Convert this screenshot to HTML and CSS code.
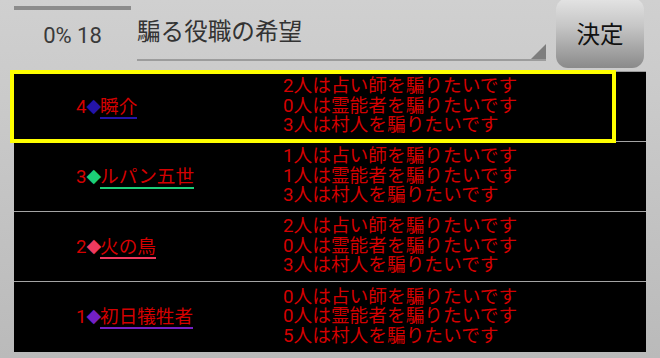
FILE: index.html
```html
<!DOCTYPE html>
<html lang="ja">
<head>
  <meta charset="UTF-8">
  <meta name="viewport" content="width=device-width,initial-scale=1.0">
  <title>騙る役職の希望</title>
  <link rel="stylesheet" href="styles.css">
</head>
<body>

  <header class="top">
    <div class="status">
      <div class="bar"></div>
      <div class="count">0% 18</div>
    </div>
    <div class="spinner">
      <span class="spinner-text">騙る役職の希望</span>
      <span class="spinner-arrow"></span>
    </div>
    <button class="decide">決定</button>
  </header>

  <ul class="wishes">
    <li class="wish selected">
      <div class="who"><span class="rank">4</span><span class="mark c-blue">◆</span><span class="name c-blue">瞬介</span></div>
      <div class="lines">
        <p>2人は占い師を騙りたいです</p>
        <p>0人は霊能者を騙りたいです</p>
        <p>3人は村人を騙りたいです</p>
      </div>
    </li>
    <li class="wish">
      <div class="who"><span class="rank">3</span><span class="mark c-green">◆</span><span class="name c-green">ルパン五世</span></div>
      <div class="lines">
        <p>1人は占い師を騙りたいです</p>
        <p>1人は霊能者を騙りたいです</p>
        <p>3人は村人を騙りたいです</p>
      </div>
    </li>
    <li class="wish">
      <div class="who"><span class="rank">2</span><span class="mark c-pink">◆</span><span class="name c-pink">火の鳥</span></div>
      <div class="lines">
        <p>2人は占い師を騙りたいです</p>
        <p>0人は霊能者を騙りたいです</p>
        <p>3人は村人を騙りたいです</p>
      </div>
    </li>
    <li class="wish">
      <div class="who"><span class="rank">1</span><span class="mark c-purple">◆</span><span class="name c-purple">初日犠牲者</span></div>
      <div class="lines">
        <p>0人は占い師を騙りたいです</p>
        <p>0人は霊能者を騙りたいです</p>
        <p>5人は村人を騙りたいです</p>
      </div>
    </li>
  </ul>

</body>
</html>
```

FILE: styles.css
```css
/* 画面全体 */
body {
  margin: 0;
  height: 358px;
  overflow: hidden;
  background: linear-gradient(#d0d0d0, #bababa);
  font-family: Roboto, "Noto Sans CJK JP", sans-serif;
}

/* ===== 上部ヘッダー ===== */
.top {
  display: flex;
  height: 71px;
  padding-left: 14px;
}

.status {
  width: 117px;
  padding-top: 6px;
}

.bar {
  height: 4px;
  background: #8c8c8c;
}

.count {
  margin-top: 14px;
  text-align: center;
  font-size: 22px;
  line-height: 24px;
  color: #3a3a3a;
}

.spinner {
  position: relative;
  margin-left: 6px;
  width: 409px;
  height: 59px;
  border-bottom: 2px solid #9c9c9c;
}

.spinner-text {
  display: block;
  padding-top: 17px;
  font-size: 23.6px;
  line-height: 30px;
  color: #333;
}

/* 右下の小さい三角 */
.spinner-arrow {
  position: absolute;
  right: 0;
  bottom: 0;
  width: 0;
  height: 0;
  border-left: 15px solid transparent;
  border-bottom: 15px solid #7e7e7e;
}

.decide {
  margin: -2px 0 0 10px;
  width: 88px;
  height: 70px;
  border: none;
  border-radius: 12px;
  background: linear-gradient(#e4e4e4, #c6c6c6 40%, #8a8a8a);
  font-family: "Noto Sans CJK JP", sans-serif;
  font-size: 23.5px;
  color: #111;
  padding: 0;
}

/* ===== 希望リスト ===== */
.wishes {
  margin: 0 0 0 14px;
  padding: 0;
  width: 632px;
  list-style: none;
  background: #000;
  border-top: 1px solid #9a9a9a;
}

.wish {
  position: relative;
  display: flex;
  align-items: center;
  height: 69px;
  border-bottom: 1px solid #a4a4a4;
}

.wish:last-child {
  border-bottom: none;
  height: 70px;
}

/* 選択中の枠 */
.wish.selected::after {
  content: "";
  position: absolute;
  left: -4px;
  top: -2px;
  width: 598px;
  height: 65px;
  border: 4px solid #ffff00;
}

.who {
  width: 207px;
  padding-left: 62px;
  font-size: 18.6px;
  line-height: 20px;
  color: #d40000;
  white-space: nowrap;
}

.mark {
  font-family: "DejaVu Sans", sans-serif;
  font-size: 19px;
  margin-right: -1px;
  vertical-align: 1px;
}

.name {
  display: inline-block;
  color: #d40000;
  border-bottom: 2px solid;
}

.lines {
  font-size: 18.7px;
  line-height: 19.5px;
  color: #d40000;
}

.lines p {
  margin: 0;
  white-space: nowrap;
}

.c-blue { color: #2414a8; }
.c-green { color: #1ccf78; }
.c-pink { color: #f03a5e; }
.c-purple { color: #7420c4; }

.name.c-blue { border-color: #2414a8; color: #d40000; }
.name.c-green { border-color: #1ccf78; color: #d40000; }
.name.c-pink { border-color: #f03a5e; color: #d40000; }
.name.c-purple { border-color: #7420c4; color: #d40000; }
```
